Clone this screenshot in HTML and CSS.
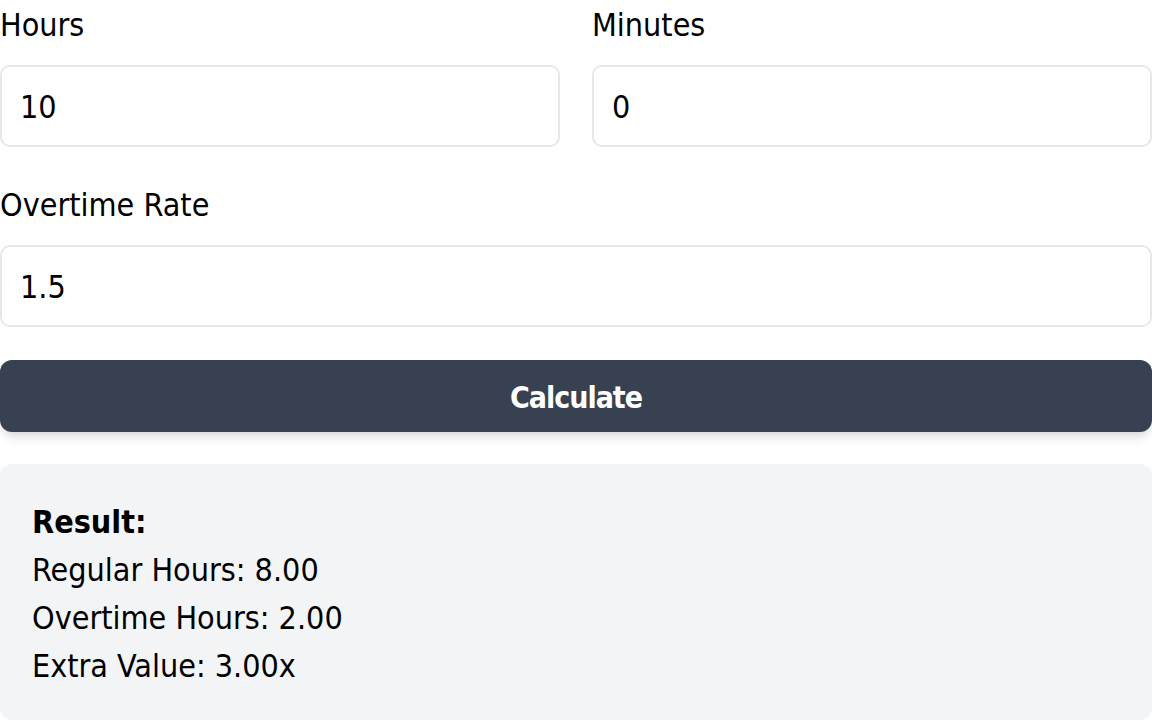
FILE: index.html
```html
<!DOCTYPE html>
<html lang="en">
<head>
<meta charset="utf-8">
<title>Overtime Calculator</title>
<link rel="stylesheet" href="styles.css">
</head>
<body>
<div class="calc">
  <div class="row">
    <div class="field">
      <label class="label" for="hours">Hours</label>
      <input class="input" id="hours" type="text" value="10">
    </div>
    <div class="field">
      <label class="label" for="minutes">Minutes</label>
      <input class="input" id="minutes" type="text" value="0">
    </div>
  </div>
  <div class="field">
    <label class="label" for="rate">Overtime Rate</label>
    <input class="input" id="rate" type="text" value="1.5">
  </div>
  <button class="btn" type="button">Calculate</button>
  <div class="result">
    <div class="result-title">Result:</div>
    <div class="result-line">Regular Hours: 8.00</div>
    <div class="result-line">Overtime Hours: 2.00</div>
    <div class="result-line">Extra Value: 3.00x</div>
  </div>
</div>
</body>
</html>
```
FILE: styles.css
```css
* { box-sizing: border-box; }
html, body { margin: 0; padding: 0; background: #ffffff; }
body {
  font-family: "DejaVu Sans Condensed", "DejaVu Sans", sans-serif;
  font-stretch: condensed;
  font-size: 32px;
  line-height: 48px;
  color: #000000;
}
.calc { display: flex; flex-direction: column; gap: 33px; }
.row { display: grid; grid-template-columns: 1fr 1fr; gap: 32px; }
.field { display: flex; flex-direction: column; gap: 16px; }
.label { display: block; height: 49px; line-height: 50px; }
.input {
  display: block;
  width: 100%;
  height: 82px;
  padding: 2px 18px 0;
  border: 2px solid #e5e7eb;
  border-radius: 10px;
  font: inherit;
  color: #000000;
  background: #ffffff;
  outline: none;
}
.btn {
  display: block;
  width: 100%;
  height: 72px;
  margin-bottom: -1px;
  padding-top: 4px;
  border: none;
  border-radius: 12px;
  background: #374151;
  color: #ffffff;
  font: inherit;
  font-size: 30px;
  letter-spacing: -1px;
  font-weight: bold;
  box-shadow: 0 8px 12px -2px rgba(0,0,0,0.1), 0 4px 8px -4px rgba(0,0,0,0.1);
  cursor: pointer;
}
.result {
  background: #f3f4f6;
  border-radius: 12px;
  padding: 34px 32px 30px;
}
.result-title { font-weight: bold; }
```
